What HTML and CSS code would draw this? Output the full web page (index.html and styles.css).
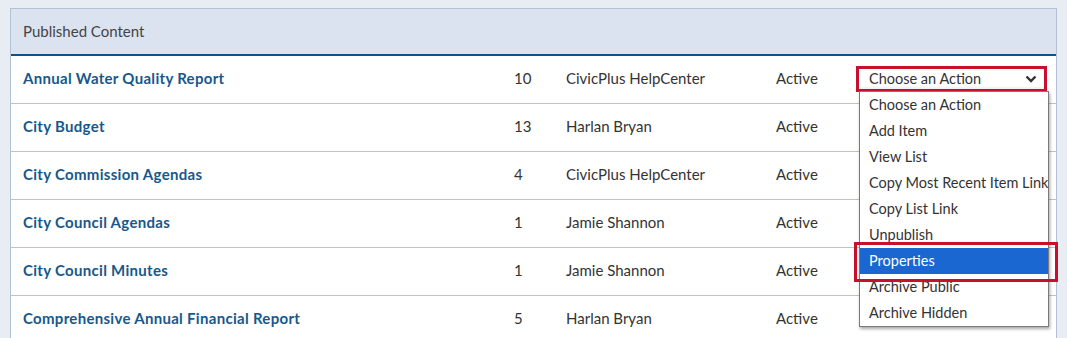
FILE: index.html
```html
<!DOCTYPE html>
<html lang="en">
<head>
  <meta charset="UTF-8">
  <title>Published Content</title>
  <link rel="stylesheet" href="styles.css">
</head>
<body>
<div class="panel">
  <div class="panel-head">Published Content</div>
  <div class="row">
    <a class="name" href="#">Annual Water Quality Report</a>
    <span class="count">10</span>
    <span class="author">CivicPlus HelpCenter</span>
    <span class="status">Active</span>
    <div class="action">
      <div class="pick">
        <span>Choose an Action</span>
        <svg class="chev" width="12" height="8" viewBox="0 0 12 8"><path d="M1.5 1.5 L6 6 L10.5 1.5" fill="none" stroke="#333" stroke-width="2.4"/></svg>
      </div>
      <ul class="menu">
        <li>Choose an Action</li>
        <li>Add Item</li>
        <li>View List</li>
        <li>Copy Most Recent Item Link</li>
        <li>Copy List Link</li>
        <li>Unpublish</li>
        <li class="on">Properties</li>
        <li>Archive Public</li>
        <li>Archive Hidden</li>
        <div class="mark"></div>
      </ul>
    </div>
  </div>
  <div class="row">
    <a class="name" href="#">City Budget</a>
    <span class="count">13</span>
    <span class="author">Harlan Bryan</span>
    <span class="status">Active</span>
    <div class="action"></div>
  </div>
  <div class="row">
    <a class="name" href="#">City Commission Agendas</a>
    <span class="count">4</span>
    <span class="author">CivicPlus HelpCenter</span>
    <span class="status">Active</span>
    <div class="action"></div>
  </div>
  <div class="row">
    <a class="name" href="#">City Council Agendas</a>
    <span class="count">1</span>
    <span class="author">Jamie Shannon</span>
    <span class="status">Active</span>
    <div class="action"></div>
  </div>
  <div class="row">
    <a class="name" href="#">City Council Minutes</a>
    <span class="count">1</span>
    <span class="author">Jamie Shannon</span>
    <span class="status">Active</span>
    <div class="action"></div>
  </div>
  <div class="row">
    <a class="name" href="#">Comprehensive Annual Financial Report</a>
    <span class="count">5</span>
    <span class="author">Harlan Bryan</span>
    <span class="status">Active</span>
    <div class="action"></div>
  </div>
</div>
</body>
</html>
```

FILE: styles.css
```css
body { margin: 0; padding: 8px 10px 0; background: #e8edf3;
  font-family: Lato, 'Open Sans', sans-serif; color: #333; overflow: hidden; }
.panel { border: 1px solid #b3c1d4; border-bottom: none; background: #fff; }
.panel-head { height: 45px; line-height: 44px; padding-left: 12px; font-size: 15px;
  background: #dae3ef; color: #444; border-bottom: 2px solid #0f5288; }
.row { display: grid; grid-template-columns: 503px 52px 210px 80px 1fr;
  height: 47px; align-items: center; border-bottom: 1px solid #b7c4d6;
  font-size: 15px; }
.name, .count, .author, .status { margin-bottom: 4px; }
.name  { padding-left: 12px; color: #17588b; font-weight: bold; text-decoration: none;
  letter-spacing: 0.3px; }
.action { position: relative; height: 100%; display: flex; align-items: center; }
.pick  { width: 168px; height: 20px; border: 3px solid #c8102e; background: #fff;
  display: flex; align-items: center; justify-content: space-between;
  padding: 0 7px 0 10px; margin-bottom: 2px; font-size: 14.5px; color: #333;
  box-shadow: inset 0 -2px 2px rgba(0,0,0,.06); }
.chev  { margin-top: 1px; }
.menu  { position: absolute; left: 3px; top: 35px; width: 188px; margin: 0; padding: 0;
  list-style: none; background: #fff; border: 1px solid #7a7a7a;
  box-shadow: 1px 2px 3px rgba(0,0,0,.35); z-index: 2; }
.menu li { height: 26px; line-height: 26px; padding-left: 9px; font-size: 14.5px;
  color: #333; white-space: nowrap; }
.menu li.on { background: #1a67d2; color: #fff; }
.mark  { position: absolute; left: -6px; top: 150px; width: 198px; height: 34px;
  border: 3px solid #c8102e; }
```
